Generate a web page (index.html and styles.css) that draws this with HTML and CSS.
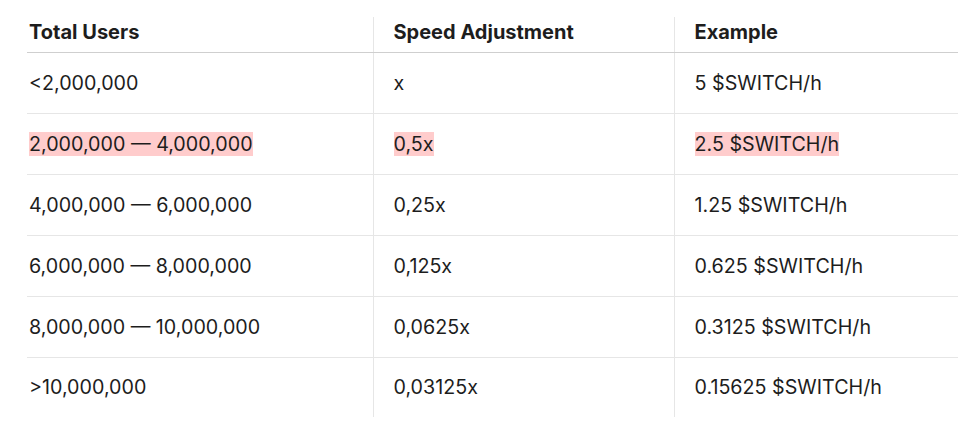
FILE: index.html
```html
<!DOCTYPE html>
<html>
<head>
<meta charset="utf-8">
<link rel="stylesheet" href="styles.css">
</head>
<body>
<div class="wrap">
<table class="speed">
  <thead>
    <tr><th>Total Users</th><th>Speed Adjustment</th><th>Example</th></tr>
  </thead>
  <tbody>
    <tr><td>&lt;2,000,000</td><td>x</td><td>5 $SWITCH/h</td></tr>
    <tr><td><mark>2,000,000 — 4,000,000</mark></td><td><mark>0,5x</mark></td><td><mark>2.5 $SWITCH/h</mark></td></tr>
    <tr><td>4,000,000 — 6,000,000</td><td>0,25x</td><td>1.25 $SWITCH/h</td></tr>
    <tr><td>6,000,000 — 8,000,000</td><td>0,125x</td><td>0.625 $SWITCH/h</td></tr>
    <tr><td>8,000,000 — 10,000,000</td><td>0,0625x</td><td>0.3125 $SWITCH/h</td></tr>
    <tr><td>&gt;10,000,000</td><td>0,03125x</td><td>0.15625 $SWITCH/h</td></tr>
  </tbody>
</table>
</div>
</body>
</html>
```
FILE: styles.css
```css
html, body {
  margin: 0;
  background: #ffffff;
}
body {
  font-family: Inter, "Noto Sans", sans-serif;
  color: #1d1d1d;
}
.wrap {
  padding: 17px 0 0 27px;
}
.speed {
  border-collapse: collapse;
  width: 931px;
  table-layout: fixed;
}
.speed th:nth-child(1), .speed td:nth-child(1) { width: 346px; }
.speed th:nth-child(2), .speed td:nth-child(2) { width: 301px; }
.speed th {
  font-size: 20px;
  font-weight: 700;
  text-align: left;
  height: 35px;
  padding: 0 20px 4px 20px;
  box-sizing: border-box;
  border-bottom: 1px solid #cfcfcf;
  vertical-align: middle;
}
.speed td {
  font-size: 19.7px;
  font-weight: 400;
  height: 61px;
  padding: 0 20px;
  box-sizing: border-box;
  border-bottom: 1px solid #e6e6e6;
  vertical-align: middle;
}
.speed tbody tr:last-child td {
  border-bottom: none;
  height: 60px;
}
.speed th + th, .speed td + td {
  border-left: 1px solid #e6e6e6;
}
.speed th:first-child, .speed td:first-child {
  padding-left: 2px;
}
mark {
  background: #ffcccc;
  color: inherit;
}
```
